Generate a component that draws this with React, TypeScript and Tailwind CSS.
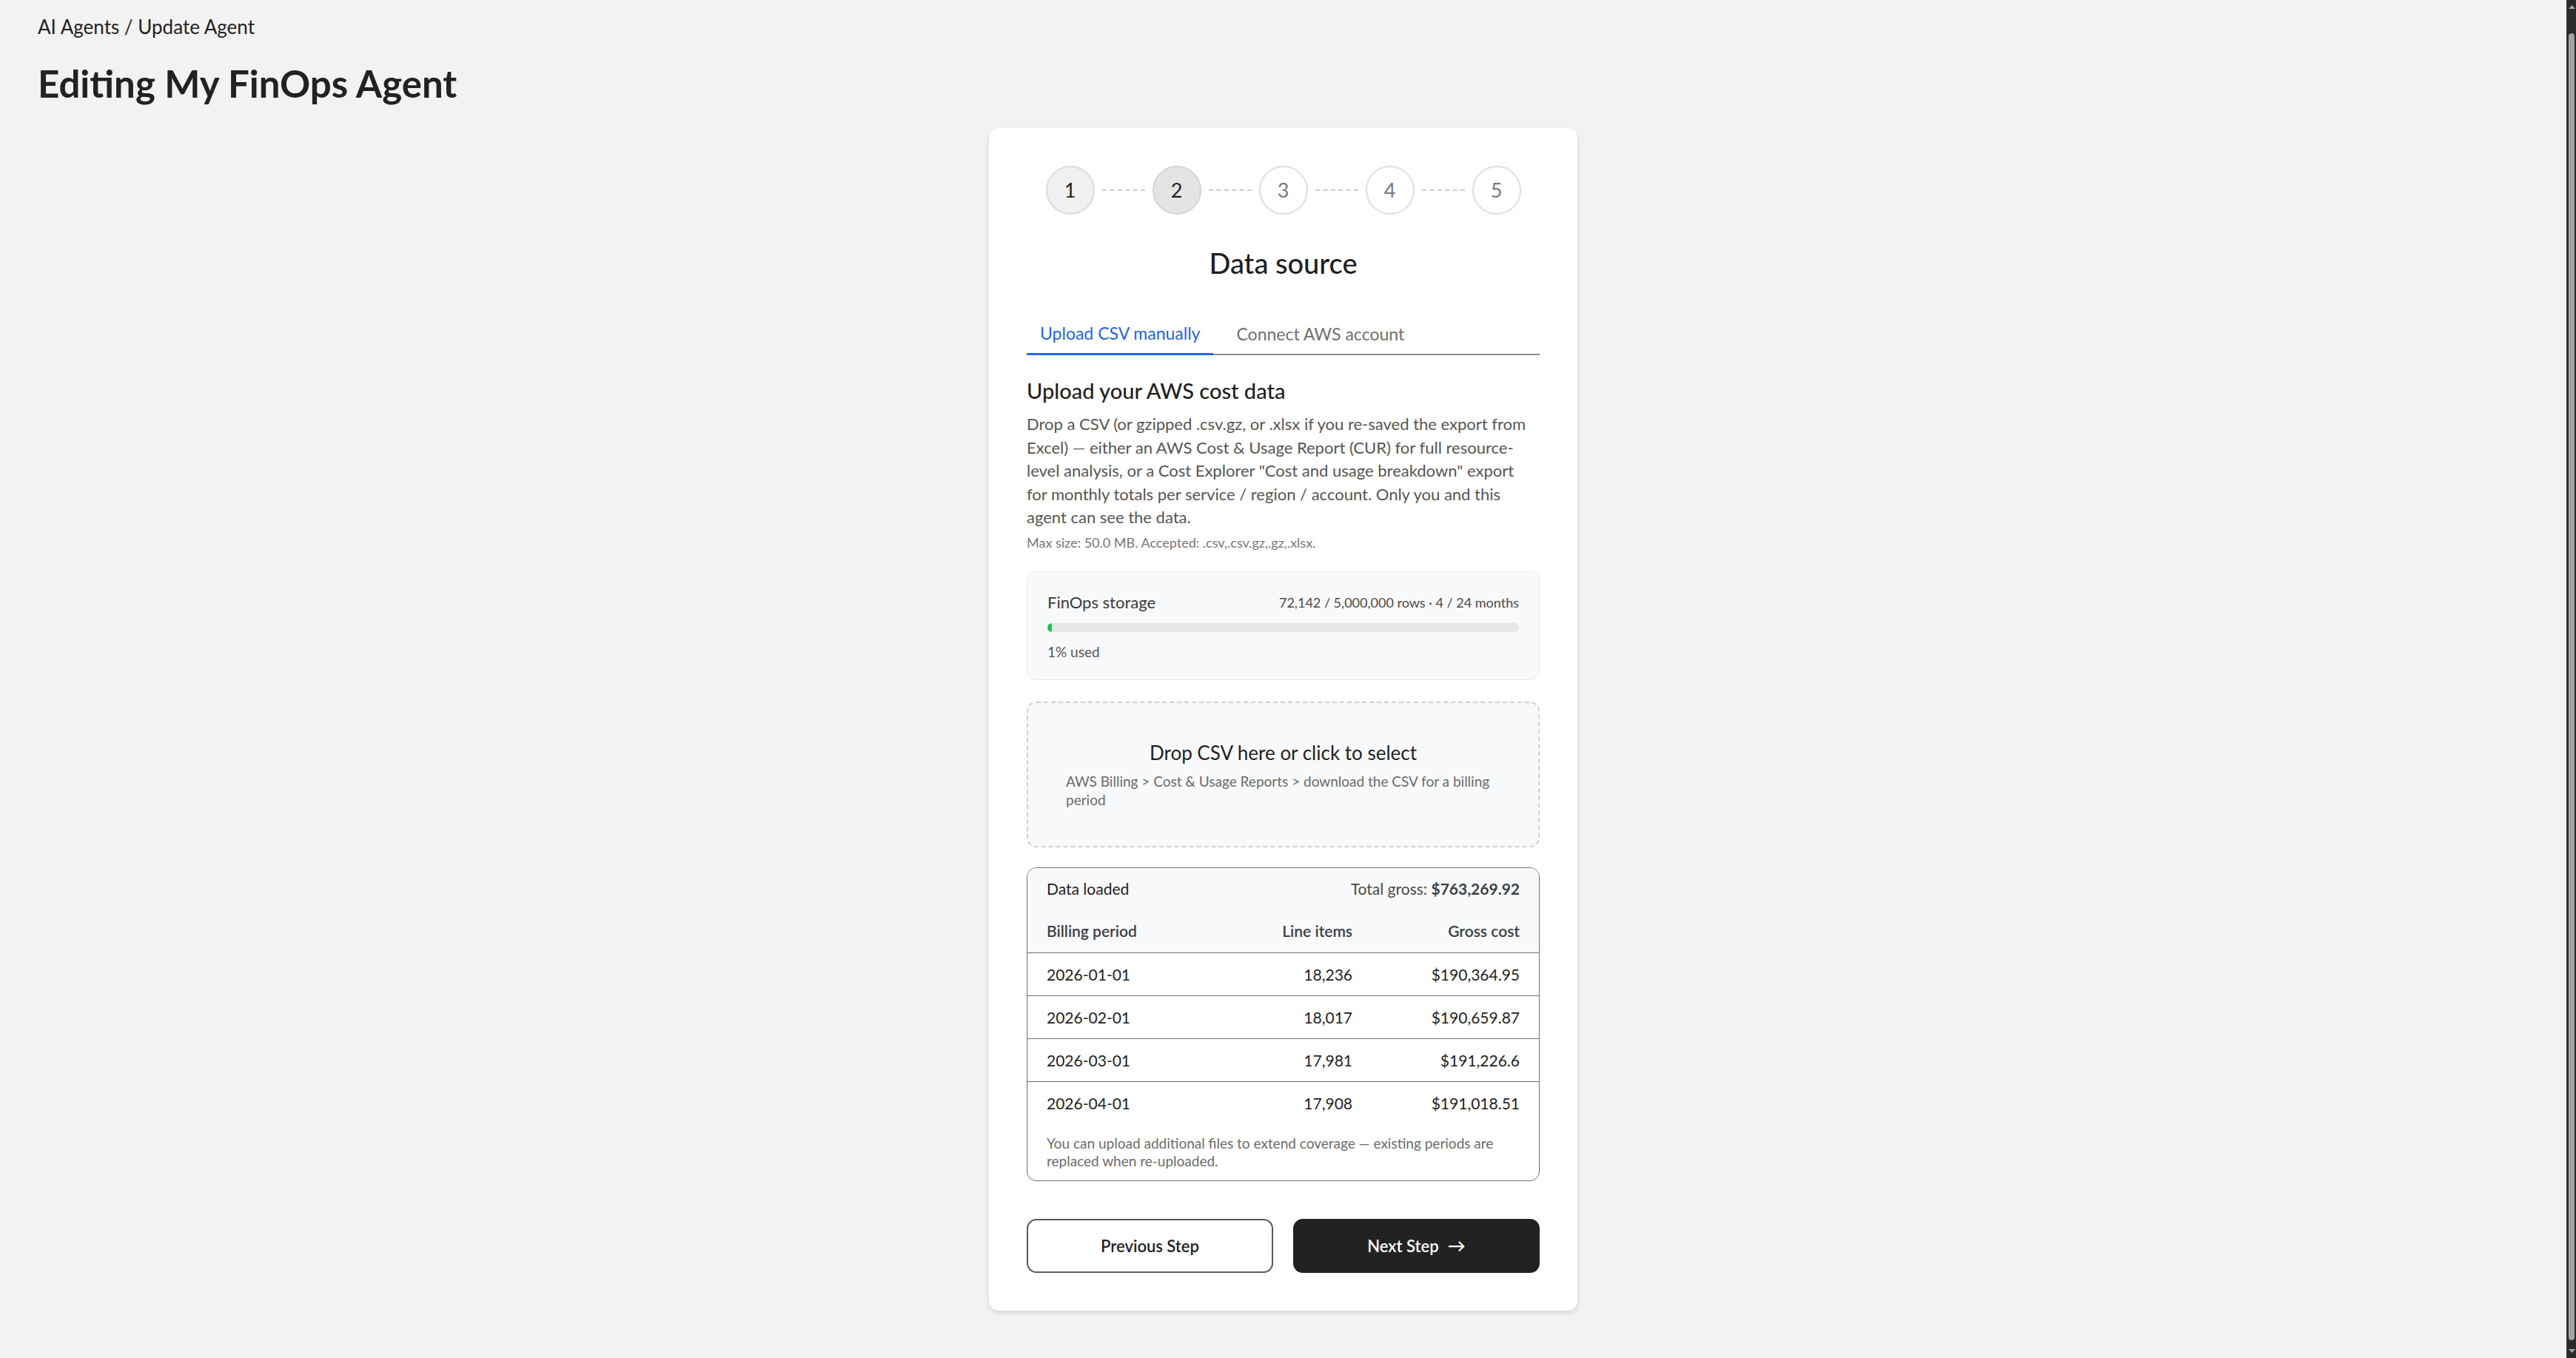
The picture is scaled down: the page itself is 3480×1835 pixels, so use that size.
import React from 'react';

const STEPS = [1, 2, 3, 4, 5];
const CURRENT_STEP = 2;

const PERIODS = [
  { period: '2026-01-01', items: '18,236', cost: '$190,364.95' },
  { period: '2026-02-01', items: '18,017', cost: '$190,659.87' },
  { period: '2026-03-01', items: '17,981', cost: '$191,226.6' },
  { period: '2026-04-01', items: '17,908', cost: '$191,018.51' },
];

function Stepper() {
  return (
    <div className="flex items-center justify-center gap-[10px]">
      {STEPS.map((n, i) => {
        const done = n < CURRENT_STEP;
        const active = n === CURRENT_STEP;
        return (
          <React.Fragment key={n}>
            {i > 0 && <div className="w-[58px] border-t-2 border-dashed border-[#cdcdcd]" />}
            <div
              className={
                active
                  ? 'flex h-[66px] w-[66px] items-center justify-center rounded-full border-2 border-[#d4d4d4] bg-[#e4e4e4] text-[27px] text-[#1f1f1f]'
                  : done
                  ? 'flex h-[66px] w-[66px] items-center justify-center rounded-full border-2 border-[#dadada] bg-[#f0f0f0] text-[27px] text-[#1f1f1f]'
                  : 'flex h-[66px] w-[66px] items-center justify-center rounded-full border-2 border-[#dedede] bg-white text-[27px] text-[#777]'
              }
            >
              {n}
            </div>
          </React.Fragment>
        );
      })}
    </div>
  );
}

function StorageMeter() {
  return (
    <div className="mt-[27px] rounded-[13px] border border-[#e8e9eb] bg-[#f8f9fa] px-[27px] pb-[24px] pt-[26px]">
      <div className="flex items-center justify-between">
        <span className="text-[22px] leading-[30px] text-[#3a3a3a]">FinOps storage</span>
        <span className="text-[18px] leading-[30px] text-[#4a4a4a]">72,142 / 5,000,000 rows · 4 / 24 months</span>
      </div>
      <div className="mt-[13px] h-[12px] w-full overflow-hidden rounded-full bg-[#e5e6e8]">
        <div className="h-full rounded-full bg-[#17c653]" style={{ width: `${Math.max(1, 1)}%` }} />
      </div>
      <div className="mt-[14px] text-[19px] leading-[26px] text-[#555]">1% used</div>
    </div>
  );
}

function DropZone() {
  return (
    <div className="mt-[29px] cursor-pointer rounded-[13px] border-2 border-dashed border-[#cfd0d2] bg-[#f8f9fa] px-[51px] pb-[50px] pt-[50px]">
      <div className="text-center text-[26px] leading-[34px] text-[#1f1f1f]">Drop CSV here or click to select</div>
      <p className="mt-[9px] text-[19px] leading-[25px] text-[#6b6b6b]">
        AWS Billing &gt; Cost &amp; Usage Reports &gt; download the CSV for a billing period
      </p>
    </div>
  );
}

function LoadedTable() {
  return (
    <div className="mt-[27px] overflow-hidden rounded-[13px] border border-[#6e6e6e]">
      <div className="bg-[#f8f9fa] px-[26px] pb-[14px] pt-[13px]">
        <div className="flex items-center justify-between text-[21px] leading-[30px]">
          <span className="text-[#1f1f1f]">Data loaded</span>
          <span className="text-[#4a4a4a]">
            Total gross: <span className="font-bold text-[#3a3f47]">$763,269.92</span>
          </span>
        </div>
        <div className="mt-[27px] grid grid-cols-[1fr_200px_226px] text-[21px] font-semibold leading-[30px] text-[#3a3f47]">
          <span>Billing period</span>
          <span className="text-right">Line items</span>
          <span className="text-right">Gross cost</span>
        </div>
      </div>
      {PERIODS.map((row) => (
        <div
          key={row.period}
          className="grid h-[58px] grid-cols-[1fr_200px_226px] items-center border-t border-[#6e6e6e] px-[26px] text-[21px] text-[#1f1f1f]"
        >
          <span>{row.period}</span>
          <span className="text-right">{row.items}</span>
          <span className="text-right">{row.cost}</span>
        </div>
      ))}
      <p className="px-[26px] pb-[14px] pt-[14px] text-[19px] leading-[24px] text-[#6b6b6b]">
        You can upload additional files to extend coverage — existing periods are replaced when re-uploaded.
      </p>
    </div>
  );
}

function Scrollbar() {
  return (
    <div className="flex w-[13px] shrink-0 flex-col items-center border-l border-[#3a3a3a] bg-[#2b2b2b] py-[3px]">
      <svg width="9" height="6" viewBox="0 0 9 6" className="mt-[3px]">
        <path d="M0 6 L4.5 1 L9 6 Z" fill="#a8a8a8" />
      </svg>
      <div className="mb-[12px] mt-[33px] w-[8px] flex-1 rounded-full bg-[#a3a3a3]" />
      <svg width="9" height="6" viewBox="0 0 9 6" className="mb-[3px]">
        <path d="M0 0 L4.5 5 L9 0 Z" fill="#a8a8a8" />
      </svg>
    </div>
  );
}

export default function App() {
  return (
    <div
      className="flex h-[1835px] w-full overflow-hidden bg-[#f2f2f2] text-[#222]"
      style={{ fontFamily: 'Lato, "Noto Sans", sans-serif' }}
    >
      <main className="flex-1 px-[51px] pt-[17px]">
        <div className="text-[26px] leading-[39px] text-[#222]">AI Agents / Update Agent</div>
        <h1 className="mt-[27px] text-[51px] font-bold leading-[60px] text-[#222]">Editing My FinOps Agent</h1>

        <div className="mx-auto mt-[30px] w-[795px] rounded-[13px] bg-white p-[51px] shadow-[0_3px_6px_rgba(0,0,0,0.12)]">
          <Stepper />

          <h2 className="mt-[42px] text-center text-[38px] font-medium leading-[46px] text-[#1f1f1f]">Data source</h2>

          <div className="mt-[57px] flex border-b-2 border-[#8a8a8a]">
            <button className="-mb-[2px] border-b-[3px] border-[#2563eb] px-[18px] pb-[12px] text-[23px] leading-[30px] text-[#2563eb]">
              Upload CSV manually
            </button>
            <button className="pb-[12px] pl-[31px] pr-[18px] text-[23px] leading-[30px] text-[#707070]">Connect AWS account</button>
          </div>

          <h3 className="mt-[30px] text-[29px] font-medium leading-[36px] text-[#1f1f1f]">Upload your AWS cost data</h3>
          <p className="mt-[11px] max-w-[679px] text-[22px] leading-[31.6px] text-[#555]">
            Drop a CSV (or gzipped .csv.gz, or .xlsx if you re-saved the export from Excel) — either an AWS Cost &amp; Usage
            Report (CUR) for full resource-level analysis, or a Cost Explorer "Cost and usage breakdown" export for monthly
            totals per service / region / account. Only you and this agent can see the data.
          </p>
          <p className="mt-[6px] text-[18px] leading-[24px] text-[#777]">Max size: 50.0 MB. Accepted: .csv,.csv.gz,.gz,.xlsx.</p>

          <StorageMeter />
          <DropZone />
          <LoadedTable />

          <div className="mt-[51px] grid grid-cols-2 gap-[27px]">
            <button className="h-[73px] rounded-[13px] border-2 border-[#5a5a5a] bg-white text-[22px] font-semibold text-[#1f1f1f]">
              Previous Step
            </button>
            <button className="flex h-[73px] items-center justify-center gap-[12px] rounded-[13px] bg-[#222] text-[22px] font-semibold text-white">
              Next Step <span className="text-[24px]">→</span>
            </button>
          </div>
        </div>
      </main>
      <Scrollbar />
    </div>
  );
}
